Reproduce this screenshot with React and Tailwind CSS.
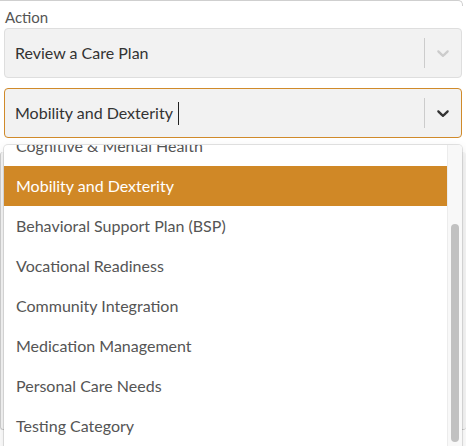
import React from 'react';

const items = [
    'Cognitive & Mental Health',
    'Mobility and Dexterity',
    'Behavioral Support Plan (BSP)',
    'Vocational Readiness',
    'Community Integration',
    'Medication Management',
    'Personal Care Needs',
    'Testing Category',
];

const Chevron = ({ className }) => (
    <svg viewBox="0 0 20 20" width="20" height="20" className={className} fill="currentColor" aria-hidden="true">
        <path d="M4.516 7.548c0.436-0.446 1.043-0.481 1.576 0l3.908 3.747 3.908-3.747c0.533-0.481 1.141-0.446 1.574 0 0.436 0.445 0.408 1.197 0 1.615-0.406 0.418-4.695 4.502-4.695 4.502-0.217 0.223-0.502 0.335-0.787 0.335s-0.57-0.112-0.789-0.335c0 0-4.287-4.084-4.695-4.502s-0.436-1.17 0-1.615z" />
    </svg>
);

const SelectBox = ({ focused, children, dim }) => (
    <div className={`flex h-[50px] items-center rounded-[4px] border bg-[#f2f2f2] ${focused ? 'border-[#d08a2a]' : 'border-[#dedede]'}`}>
        <div className="flex flex-1 items-center pl-[10px] text-[16px] text-[#333]">{children}</div>
        <span className="my-[9px] w-px self-stretch bg-[#cccccc]" />
        <div className={`px-[8px] ${dim ? 'text-[#cccccc]' : 'text-[#333]'}`}>
            <Chevron />
        </div>
    </div>
);

export default function App() {
    return (
        <div className="relative h-[446px] w-[466px] overflow-hidden bg-white" style={{ fontFamily: 'Lato, "Open Sans", sans-serif' }}>
            {/* card edge */}
            <div className="h-[6px] w-[463px] rounded-tr-[5px] border-t border-r border-[#cfcfcf]" />

            <div className="pl-[4px] pr-[4px]">
                <div className="pl-px text-[15px] leading-[22px] text-[#555]">Action</div>
                <SelectBox dim>Review a Care Plan</SelectBox>
                <div className="h-[10px]" />
                <SelectBox focused>
                    Mobility and Dexterity
                    <span className="ml-[5px] inline-block h-[23px] w-px bg-[#222]" />
                </SelectBox>
            </div>

            {/* field behind the menu */}
            <div className="mt-[14px] h-[278px] w-[466px] rounded-[3px] border-b border-l border-[#cfcfcf] bg-[#f7f7f7]" />

            {/* open menu */}
            <div className="absolute left-[4px] top-[145px] flex h-[310px] w-[458px] overflow-hidden rounded-t-[4px] bg-white shadow-[0_0_0_1px_rgba(0,0,0,0.1),0_4px_11px_rgba(0,0,0,0.12)]">
                <div className="flex-1 overflow-hidden">
                    <div className="-mt-[19px]">
                        {items.map((item, i) => (
                            <div
                                key={item}
                                className={`flex h-[40px] items-center pl-[12px] text-[16px] ${i === 1 ? 'bg-[#d08826] text-white' : 'text-[#555]'}`}
                            >
                                {item}
                            </div>
                        ))}
                    </div>
                </div>
                <div className="w-[15px] border-l border-[#ececec] bg-[#f8f8f8] pt-[79px] pl-[3px]">
                    <div className="h-[218px] w-[8px] rounded-full bg-[#c1c1c1]" />
                </div>
            </div>
        </div>
    );
}
